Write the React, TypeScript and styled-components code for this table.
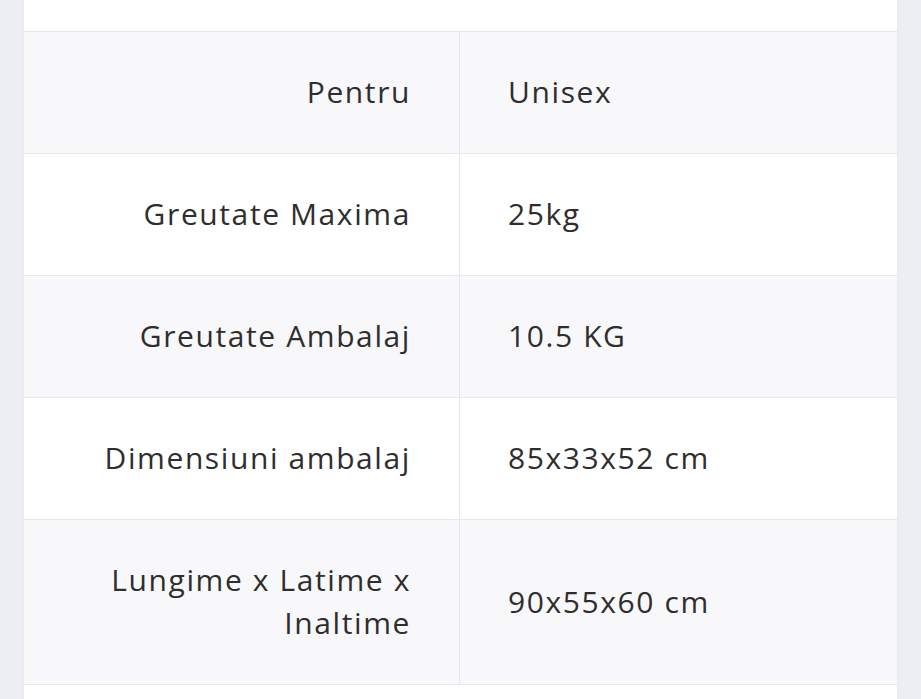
import React from "react"
import styled, { createGlobalStyle } from 'styled-components'

interface ISpec {
    label: string
    value: string
}

const specs: ISpec[] = [
    { label: 'Pentru', value: 'Unisex' },
    { label: 'Greutate Maxima', value: '25kg' },
    { label: 'Greutate Ambalaj', value: '10.5 KG' },
    { label: 'Dimensiuni ambalaj', value: '85x33x52 cm' },
    { label: 'Lungime x Latime x Inaltime', value: '90x55x60 cm' },
]

function App(): JSX.Element {
    return (
        <>
            <GlobalStyle />
            <PageSCP>
                <PanelSCP>
                    <SpecTableSCP>
                        {specs.map((spec, index) => (
                            <SpecRowSCP key={spec.label} $striped={index % 2 === 0}>
                                <LabelCellSCP>{spec.label}</LabelCellSCP>
                                <ValueCellSCP>{spec.value}</ValueCellSCP>
                            </SpecRowSCP>
                        ))}
                    </SpecTableSCP>
                </PanelSCP>
            </PageSCP>
        </>
    )
}

export default App

const GlobalStyle = createGlobalStyle`
    html, body {
        margin: 0;
        padding: 0;
        background: #eceef3;
        font-family: "Open Sans", "Noto Sans", sans-serif;
    }
`

const PageSCP = styled.div`
    min-height: 699px;
    padding: 0 24px;
    overflow: hidden;
`

const PanelSCP = styled.div`
    background: #ffffff;
    padding: 31px 0 40px;
    box-shadow: 0 0 4px rgba(0, 0, 0, 0.03);
`

const SpecTableSCP = styled.div`
    border-top: 1px solid #e8e8ec;
`

const SpecRowSCP = styled.div<{ $striped: boolean }>`
    display: grid;
    grid-template-columns: 436px 1fr;
    background: ${(props) => props.$striped ? '#f8f8fa' : '#ffffff'};
    border-bottom: 1px solid #e8e8ec;
`

const CellSCP = styled.div`
    font-size: 30px;
    line-height: 43px;
    color: #2e2e2e;
    letter-spacing: 1.6px;
    padding: 38px 0 40px;
    display: flex;
    align-items: center;
`

const LabelCellSCP = styled(CellSCP)`
    justify-content: flex-end;
    text-align: right;
    padding-right: 48px;
    padding-left: 60px;
    border-right: 1px solid #e8e8ec;
`

const ValueCellSCP = styled(CellSCP)`
    padding-left: 48px;
    padding-right: 24px;
`
